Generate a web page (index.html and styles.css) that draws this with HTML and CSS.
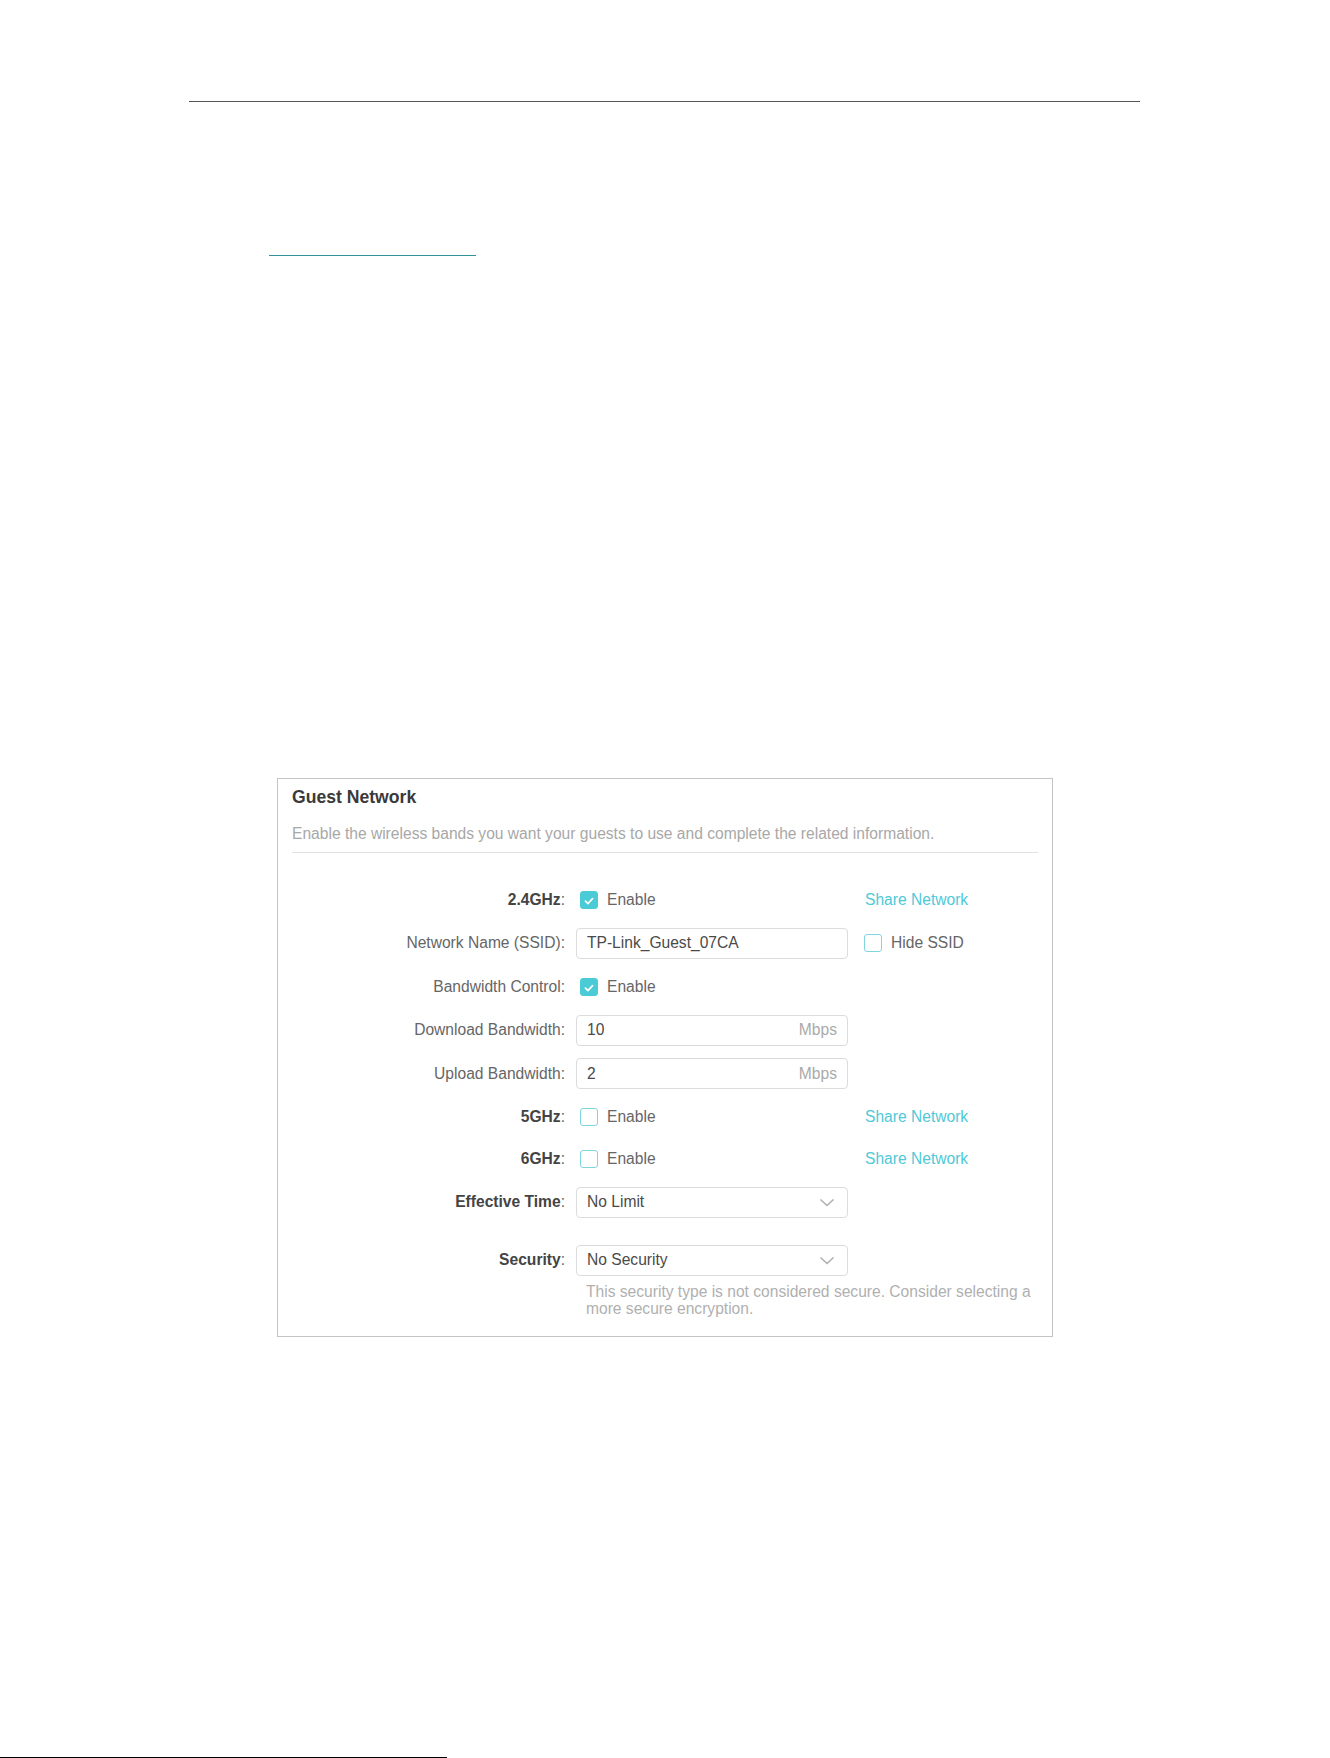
FILE: index.html
```html
<!DOCTYPE html>
<html lang="en">
<head>
    <meta charset="UTF-8">
    <meta name="viewport" content="width=device-width, initial-scale=1.0">
    <title>Guest Network</title>
    <link rel="stylesheet" href="styles.css">
</head>
<body>
    <div class="page">
        <div class="top-rule"></div>
        <div class="link-rule"></div>

        <section class="panel">
            <h2 class="panel-title">Guest Network</h2>
            <p class="panel-desc">Enable the wireless bands you want your guests to use and complete the related information.</p>

            <div class="form">
                <!-- 2.4GHz band -->
                <div class="form-row">
                    <div class="form-label"><b>2.4GHz</b>:</div>
                    <div class="form-field">
                        <span class="check checked">
                            <svg width="18" height="18" viewBox="0 0 18 18"><polyline points="5,9.2 7.8,12 13,6.4" fill="none" stroke="#fff" stroke-width="1.9" stroke-linecap="round" stroke-linejoin="round"/></svg>
                        </span>
                        <span class="check-text">Enable</span>
                    </div>
                    <div class="form-extra"><a class="share-link">Share Network</a></div>
                </div>

                <div class="form-row">
                    <div class="form-label">Network Name (SSID):</div>
                    <div class="text-input"><span>TP-Link_Guest_07CA</span></div>
                    <div class="form-extra">
                        <span class="check"></span>
                        <span class="check-text">Hide SSID</span>
                    </div>
                </div>

                <div class="form-row">
                    <div class="form-label">Bandwidth Control:</div>
                    <div class="form-field">
                        <span class="check checked">
                            <svg width="18" height="18" viewBox="0 0 18 18"><polyline points="5,9.2 7.8,12 13,6.4" fill="none" stroke="#fff" stroke-width="1.9" stroke-linecap="round" stroke-linejoin="round"/></svg>
                        </span>
                        <span class="check-text">Enable</span>
                    </div>
                </div>

                <div class="form-row">
                    <div class="form-label">Download Bandwidth:</div>
                    <div class="text-input"><span>10</span><span class="unit">Mbps</span></div>
                </div>

                <div class="form-row">
                    <div class="form-label">Upload Bandwidth:</div>
                    <div class="text-input"><span>2</span><span class="unit">Mbps</span></div>
                </div>

                <!-- 5GHz / 6GHz bands -->
                <div class="form-row short">
                    <div class="form-label"><b>5GHz</b>:</div>
                    <div class="form-field">
                        <span class="check"></span>
                        <span class="check-text">Enable</span>
                    </div>
                    <div class="form-extra"><a class="share-link">Share Network</a></div>
                </div>

                <div class="form-row short">
                    <div class="form-label"><b>6GHz</b>:</div>
                    <div class="form-field">
                        <span class="check"></span>
                        <span class="check-text">Enable</span>
                    </div>
                    <div class="form-extra"><a class="share-link">Share Network</a></div>
                </div>

                <div class="form-row timing">
                    <div class="form-label"><b>Effective Time</b>:</div>
                    <div class="text-input select">
                        <span>No Limit</span>
                        <svg class="arrow" width="16" height="9" viewBox="0 0 16 9"><polyline points="1.5,1.5 8,7.5 14.5,1.5" fill="none" stroke="#b0b0b0" stroke-width="1.6"/></svg>
                    </div>
                </div>

                <div class="form-row security">
                    <div class="form-label"><b>Security</b>:</div>
                    <div class="text-input select">
                        <span>No Security</span>
                        <svg class="arrow" width="16" height="9" viewBox="0 0 16 9"><polyline points="1.5,1.5 8,7.5 14.5,1.5" fill="none" stroke="#b0b0b0" stroke-width="1.6"/></svg>
                    </div>
                    <p class="form-hint">This security type is not considered secure. Consider selecting a more secure encryption.</p>
                </div>
            </div>
        </section>

        <div class="bottom-rule"></div>
    </div>
</body>
</html>
```

FILE: styles.css
```css
html, body {
    margin: 0;
    padding: 0;
    background-color: #fff;
}
body {
    font-family: "Liberation Sans", Arial, sans-serif;
    color: #555;
}
.page {
    width: 1330px;
    height: 1758px;
    overflow: hidden;
}
.top-rule {
    margin: 101px 0 0 189px;
    width: 951px;
    height: 1px;
    background-color: #555;
}
.link-rule {
    margin: 153px 0 0 269px;
    width: 207px;
    height: 1px;
    background-color: #2e9298;
}

/* guest network card */
.panel {
    margin: 522px 0 0 277px;
    width: 776px;
    height: 559px;
    border: 1px solid #c4c4c4;
    padding: 8px 14px 0 14px;
    box-sizing: border-box;
}
.panel-title {
    margin: 0;
    font-size: 17.6px;
    line-height: 20px;
    font-weight: bold;
    color: #3a3a3a;
}
.panel-desc {
    margin: 18px 0 0 0;
    padding-bottom: 9px;
    font-size: 15.6px;
    line-height: 18px;
    color: #a8a8a8;
    border-bottom: 1px solid #e2e2e2;
}
.form {
    display: flex;
    flex-direction: column;
    gap: 12.5px;
    margin-top: 31px;
}
.form-row {
    display: grid;
    grid-template-columns: 273px 272px 1fr;
    column-gap: 11px;
    align-items: center;
    height: 31px;
    font-size: 15.6px;
}
.form-row.short {
    height: 28px;
    margin-top: 1px;
}
.form-row.short + .form-row.short {
    margin-top: 1.5px;
}
.form-row.timing {
    margin-top: 1.5px;
}
.form-row.security {
    height: auto;
    margin-top: 14.5px;
    grid-template-rows: 31px auto;
}
.form-label {
    text-align: right;
    color: #666;
    white-space: nowrap;
}
.form-label b {
    color: #444;
}
.form-field, .form-extra {
    display: flex;
    align-items: center;
}
.form-field {
    padding-left: 4px;
}
.form-extra {
    padding-left: 5px;
}
.check {
    width: 18px;
    height: 18px;
    box-sizing: border-box;
    border: 1px solid #7fd6df;
    border-radius: 3px;
    background-color: #fff;
    display: inline-flex;
}
.check.checked {
    border-color: #4acbd6;
    background-color: #4acbd6;
}
.check-text {
    margin-left: 9px;
    color: #666;
}
.share-link {
    margin-left: 1px;
    color: #4fc9d8;
    cursor: pointer;
}
.text-input {
    height: 31px;
    box-sizing: border-box;
    border: 1px solid #dcdcdc;
    border-radius: 4px;
    padding: 0 10px;
    display: flex;
    align-items: center;
    justify-content: space-between;
    color: #4a4a4a;
}
.text-input .unit {
    color: #aaa;
}
.select {
    padding-right: 12px;
}
.form-hint {
    grid-column: 2 / 4;
    margin: 7px 0 0 0;
    padding-left: 10px;
    font-size: 15.6px;
    line-height: 17.5px;
    color: #b0b0b0;
}
.bottom-rule {
    margin-top: 420px;
    width: 447px;
    height: 1px;
    background-color: #000;
}
```
